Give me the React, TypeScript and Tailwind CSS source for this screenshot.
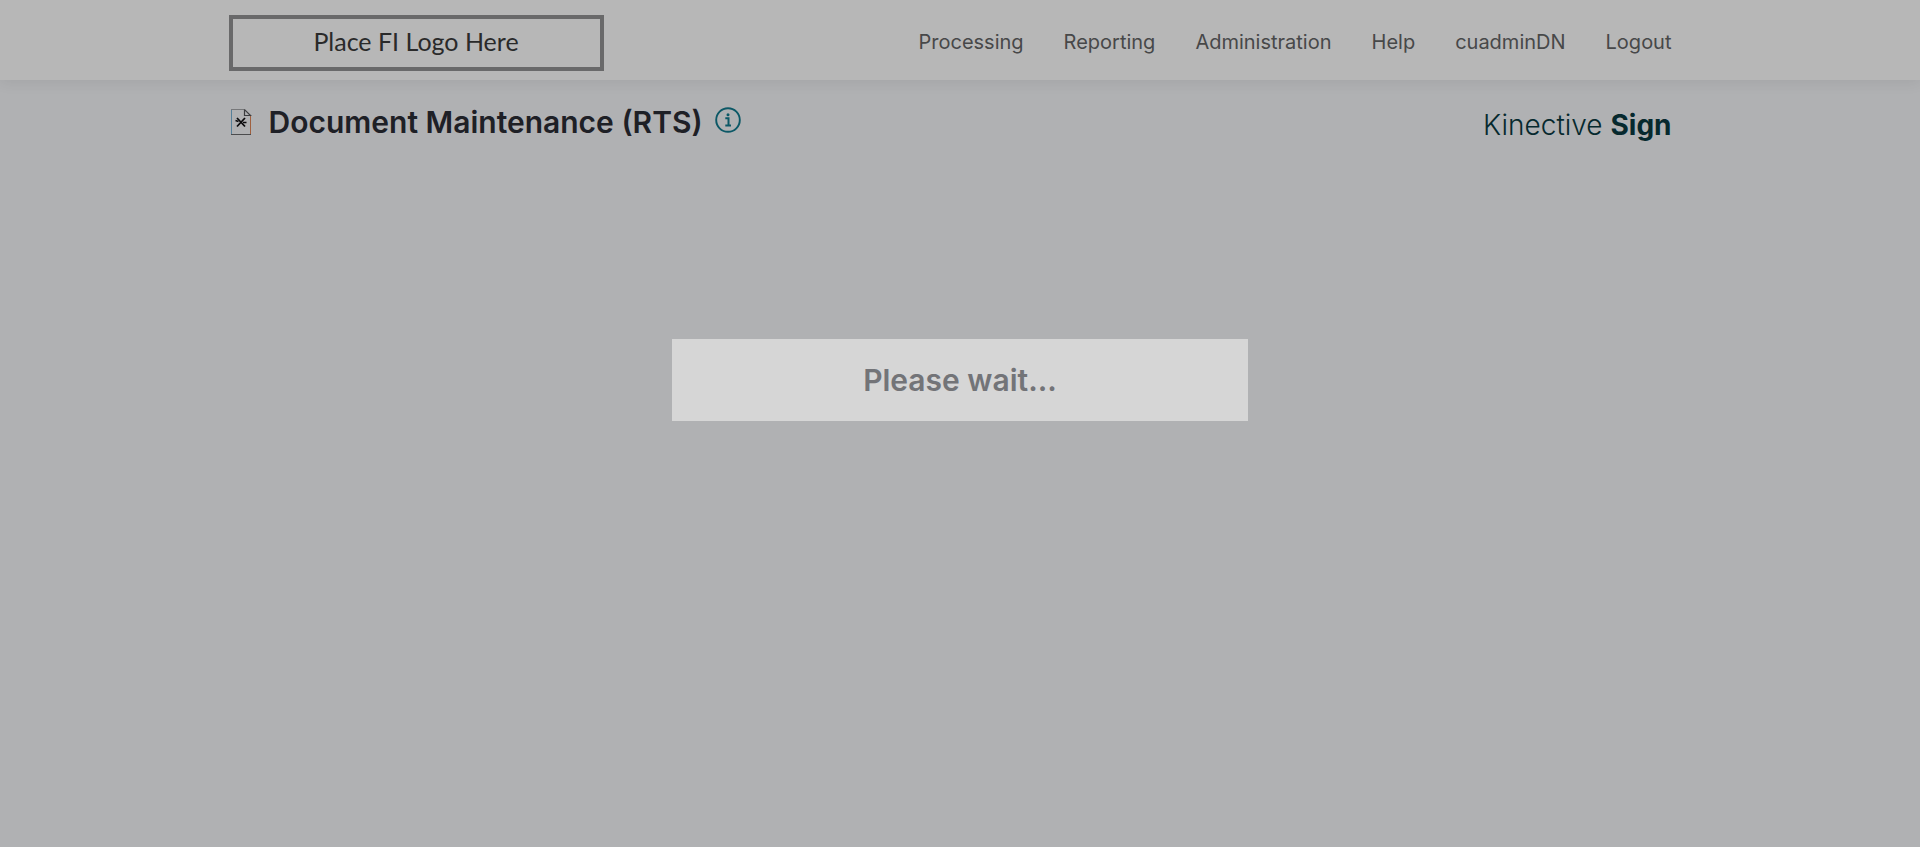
import React from 'react';

const NAV_ITEMS = ['Processing', 'Reporting', 'Administration', 'Help', 'cuadminDN', 'Logout'];

const DocumentIcon: React.FC = () => (
    <svg xmlns="http://www.w3.org/2000/svg" width="24" height="28" viewBox="0 0 24 28" fill="none" aria-hidden="true">
        <path d="M2 1.5H16" stroke="#77787a" />
        <path d="M2.5 2V26" stroke="#56809a" />
        <path d="M2 26.5H22" stroke="#4b4c4e" />
        <path d="M21.5 7V26" stroke="#a0603f" />
        <path d="M15.5 1.5V7.5H21.5L15.8 1.8" stroke="#3c3d40" strokeWidth="1.2" />
        <path d="M8 10L16 18.5M16 10L8 18.5" stroke="#0a0a0c" strokeWidth="1.8" />
        <path d="M6.5 12.5L9.5 13.5M14 14.5L17.5 14.5" stroke="#0a0a0c" strokeWidth="1.4" />
    </svg>
);

const InfoIcon: React.FC = () => (
    <svg xmlns="http://www.w3.org/2000/svg" width="26" height="26" viewBox="0 0 26 26" fill="none" aria-hidden="true">
        <circle cx="13" cy="13" r="11.8" stroke="#0c5866" strokeWidth="1.9" />
        <circle cx="13" cy="7.8" r="1.5" fill="#0c5866" />
        <path d="M10.3 11.3H13.5V18.3M10.3 18.5H16" stroke="#0c5866" strokeWidth="2" />
    </svg>
);

const Header: React.FC = () => (
    <header className="relative bg-[#b7b7b7] pr-5 shadow-[0_2px_14px_rgba(0,0,0,0.08)]">
        <div className="mx-auto flex h-20 w-full max-w-[1443px] items-center justify-between">
            <a
                href="#"
                className="mt-1.5 flex h-14 w-[375px] items-center justify-center border-4 border-[#69696a] pb-0.5 font-[Lato,sans-serif] text-[25px] text-[#2a2a2a]"
            >
                Place FI Logo Here
            </a>
            <nav className="flex items-center gap-10 pt-1 text-xl text-[#474849]">
                {NAV_ITEMS.map((item) => (
                    <a key={item} href="#">
                        {item}
                    </a>
                ))}
            </nav>
        </div>
    </header>
);

const PageTitle: React.FC = () => (
    <div className="pr-5">
        <div className="mx-auto flex w-full max-w-[1443px] items-start justify-between pt-6">
            <div className="flex items-center">
                <DocumentIcon />
                <h1 className="ml-4 text-3xl font-semibold text-[#1e2026]">Document Maintenance (RTS)</h1>
                <button type="button" aria-label="Information" className="mb-1 ml-3">
                    <InfoIcon />
                </button>
            </div>
            <p className="pt-1 text-[28px] leading-[34px] font-light text-[#06292e]">
                Kinective <span className="font-bold">Sign</span>
            </p>
        </div>
    </div>
);

// ページ全体を覆う待機メッセージ
const WaitDialog: React.FC = () => (
    <div className="fixed inset-0 flex items-start justify-center pt-[339px]">
        <div role="alertdialog" aria-label="Please wait..." className="w-[30%] bg-[#d6d6d6] px-4 py-5 text-center">
            <h2 className="text-3xl leading-[42px] font-semibold text-[#737478]">Please wait...</h2>
        </div>
    </div>
);

export default function App() {
    return (
        <div className="min-h-screen bg-[#b0b1b3] font-[Inter,sans-serif]">
            <Header />
            <main>
                <PageTitle />
            </main>
            <WaitDialog />
        </div>
    );
}
